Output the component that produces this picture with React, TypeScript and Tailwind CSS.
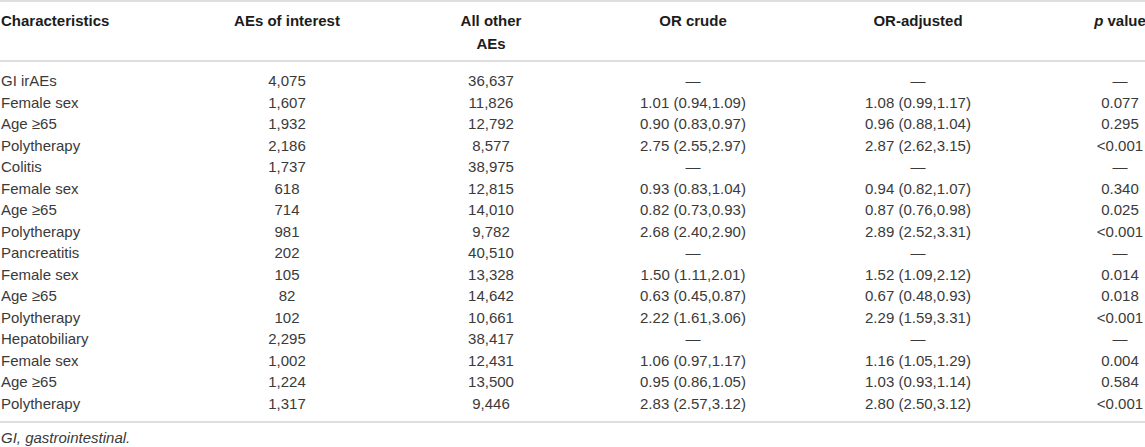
import React from "react";

type Row = {
  label: string;
  aes: string;
  other: string;
  crude: string;
  adjusted: string;
  p: string;
};

const D = "—";

const rows: Row[] = [
  { label: "GI irAEs", aes: "4,075", other: "36,637", crude: D, adjusted: D, p: D },
  { label: "Female sex", aes: "1,607", other: "11,826", crude: "1.01 (0.94,1.09)", adjusted: "1.08 (0.99,1.17)", p: "0.077" },
  { label: "Age ≥65", aes: "1,932", other: "12,792", crude: "0.90 (0.83,0.97)", adjusted: "0.96 (0.88,1.04)", p: "0.295" },
  { label: "Polytherapy", aes: "2,186", other: "8,577", crude: "2.75 (2.55,2.97)", adjusted: "2.87 (2.62,3.15)", p: "<0.001" },
  { label: "Colitis", aes: "1,737", other: "38,975", crude: D, adjusted: D, p: D },
  { label: "Female sex", aes: "618", other: "12,815", crude: "0.93 (0.83,1.04)", adjusted: "0.94 (0.82,1.07)", p: "0.340" },
  { label: "Age ≥65", aes: "714", other: "14,010", crude: "0.82 (0.73,0.93)", adjusted: "0.87 (0.76,0.98)", p: "0.025" },
  { label: "Polytherapy", aes: "981", other: "9,782", crude: "2.68 (2.40,2.90)", adjusted: "2.89 (2.52,3.31)", p: "<0.001" },
  { label: "Pancreatitis", aes: "202", other: "40,510", crude: D, adjusted: D, p: D },
  { label: "Female sex", aes: "105", other: "13,328", crude: "1.50 (1.11,2.01)", adjusted: "1.52 (1.09,2.12)", p: "0.014" },
  { label: "Age ≥65", aes: "82", other: "14,642", crude: "0.63 (0.45,0.87)", adjusted: "0.67 (0.48,0.93)", p: "0.018" },
  { label: "Polytherapy", aes: "102", other: "10,661", crude: "2.22 (1.61,3.06)", adjusted: "2.29 (1.59,3.31)", p: "<0.001" },
  { label: "Hepatobiliary", aes: "2,295", other: "38,417", crude: D, adjusted: D, p: D },
  { label: "Female sex", aes: "1,002", other: "12,431", crude: "1.06 (0.97,1.17)", adjusted: "1.16 (1.05,1.29)", p: "0.004" },
  { label: "Age ≥65", aes: "1,224", other: "13,500", crude: "0.95 (0.86,1.05)", adjusted: "1.03 (0.93,1.14)", p: "0.584" },
  { label: "Polytherapy", aes: "1,317", other: "9,446", crude: "2.83 (2.57,3.12)", adjusted: "2.80 (2.50,3.12)", p: "<0.001" },
];

// column tracks chosen so the centred columns sit where the reference has them
const grid = "grid grid-cols-[185px_204px_204px_200px_250px_1fr]";
const mid = "flex justify-center whitespace-nowrap";
const last = "justify-self-end w-[50px] flex justify-center whitespace-nowrap";

export default function App() {
  return (
    <div className="w-[1145px] bg-white font-['Liberation_Sans',Arial,sans-serif] text-[15px] text-[#3a3a3a]">
      <div className="border-t-2 border-b-2 border-[#dedede]">
        <div className={`${grid} pt-[7px] pb-[5px] leading-[23px] font-bold text-[#1c1c1c] border-b-2 border-[#dedede]`}>
          <div className="pl-[1px]">Characteristics</div>
          <div className={mid}>AEs of interest</div>
          <div className="flex justify-center text-center">
            <span className="w-[80px]">All other AEs</span>
          </div>
          <div className={mid}>OR crude</div>
          <div className={mid}>OR-adjusted</div>
          <div className={last}>
            <span>
              <i>p</i> value
            </span>
          </div>
        </div>

        <div className="pt-[8px] pb-[7px]">
          {rows.map((r, i) => (
            <div key={i} className={`${grid} h-[21.5px] items-center`}>
              <div className="pl-[1px] whitespace-nowrap">{r.label}</div>
              <div className={mid}>{r.aes}</div>
              <div className={mid}>{r.other}</div>
              <div className={mid}>{r.crude}</div>
              <div className={mid}>{r.adjusted}</div>
              <div className={last}>{r.p}</div>
            </div>
          ))}
        </div>
      </div>
      <p className="mt-[5px] pl-[1px] leading-[20px] italic">GI, gastrointestinal.</p>
    </div>
  );
}
